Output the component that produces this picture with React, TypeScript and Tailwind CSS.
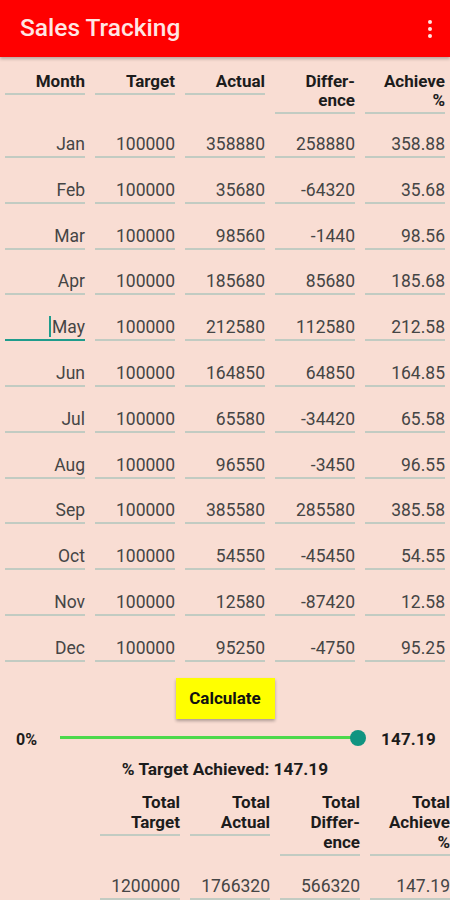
import React from "react";

const rows: [string, string, string, string, string][] = [
  ["Jan", "100000", "358880", "258880", "358.88"],
  ["Feb", "100000", "35680", "-64320", "35.68"],
  ["Mar", "100000", "98560", "-1440", "98.56"],
  ["Apr", "100000", "185680", "85680", "185.68"],
  ["May", "100000", "212580", "112580", "212.58"],
  ["Jun", "100000", "164850", "64850", "164.85"],
  ["Jul", "100000", "65580", "-34420", "65.58"],
  ["Aug", "100000", "96550", "-3450", "96.55"],
  ["Sep", "100000", "385580", "285580", "385.58"],
  ["Oct", "100000", "54550", "-45450", "54.55"],
  ["Nov", "100000", "12580", "-87420", "12.58"],
  ["Dec", "100000", "95250", "-4750", "95.25"],
];

function Cell({ children, bold, focused }: { children: React.ReactNode; bold?: boolean; focused?: boolean }) {
  return (
    <div
      className={
        "w-[80px] shrink-0 text-right leading-[19px] pb-[2px] border-b-2 whitespace-nowrap " +
        (focused ? "border-[#1f9c8c] " : "border-[#c2cbc2] ") +
        (bold ? "font-bold text-[17px] text-[#1c1c1c]" : "text-[17.5px] text-[#454545]")
      }
    >
      {children}
    </div>
  );
}

const totalHead =
  "w-[80px] shrink-0 text-right leading-[20px] pb-[2px] border-b-2 border-[#c2cbc2] font-bold text-[17px] text-[#1c1c1c] whitespace-nowrap";

export default function App() {
  return (
    <div
      className="w-[450px] h-[900px] overflow-hidden bg-[#f9ddd3] relative"
      style={{ fontFamily: "Roboto, 'Liberation Sans', sans-serif" }}
    >
      <div className="h-[57px] bg-[#ff0000] flex items-center justify-between pl-[20px] pr-[18px] shadow-[0_2px_3px_rgba(0,0,0,0.25)] relative z-10">
        <span className="text-[24.5px] font-medium text-[#ffe6e3]">Sales Tracking</span>
        <div className="flex flex-col gap-[3px] items-center">
          <span className="w-[4px] h-[4px] rounded-full bg-[#ffe6e3]" />
          <span className="w-[4px] h-[4px] rounded-full bg-[#ffe6e3]" />
          <span className="w-[4px] h-[4px] rounded-full bg-[#ffe6e3]" />
        </div>
      </div>

      <div className="px-[5px] pt-[15px]">
        <div className="flex gap-[10px] items-start">
          <Cell bold>Month</Cell>
          <Cell bold>Target</Cell>
          <Cell bold>Actual</Cell>
          <Cell bold>
            Differ-
            <br />
            ence
          </Cell>
          <Cell bold>
            Achieve
            <br />%
          </Cell>
        </div>
        {rows.map((r, i) => (
          <div key={r[0]} className={"flex gap-[10px] items-start " + (i === 0 ? "pt-[21px]" : "pt-[22.8px]")}>
            {r.map((v, j) =>
              i === 4 && j === 0 ? (
                <Cell key={j} focused>
                  <span className="relative">
                    <span className="absolute left-[-3px] top-[-1px] w-[2px] h-[21px] bg-[#1f9c8c]" />
                    {v}
                  </span>
                </Cell>
              ) : (
                <Cell key={j}>{v}</Cell>
              )
            )}
          </div>
        ))}
      </div>

      <div className="flex justify-center pt-[16px]">
        <button className="w-[99px] h-[41px] bg-[#ffff00] font-bold text-[17px] text-[#111] shadow-[0_2px_3px_rgba(0,0,0,0.3)]">
          Calculate
        </button>
      </div>

      <div className="flex items-center h-[20px] mt-[9px]">
        <span className="w-[60px] pl-[16px] font-bold text-[16px] text-[#1c1c1c] mt-[4px]">0%</span>
        <div className="relative w-[298px] h-[3px] bg-[#4cd94c]">
          <span className="absolute right-[-8px] top-[-6.5px] w-[16px] h-[16px] rounded-full bg-[#119481]" />
        </div>
        <span className="ml-[23px] font-bold text-[17px] text-[#1c1c1c] mt-[4px] tracking-[0.2px]">147.19</span>
      </div>

      <div className="text-center font-bold text-[17.3px] text-[#1c1c1c] mt-[11px] leading-[20px]">
        % Target Achieved: 147.19
      </div>

      <div className="pl-[100px] pt-[13px]">
        <div className="flex gap-[10px] items-start">
          <div className={totalHead}>
            Total
            <br />
            Target
          </div>
          <div className={totalHead}>
            Total
            <br />
            Actual
          </div>
          <div className={totalHead}>
            Total
            <br />
            Differ-
            <br />
            ence
          </div>
          <div className={totalHead}>
            Total
            <br />
            Achieve
            <br />%
          </div>
        </div>
        <div className="flex gap-[10px] items-start pt-[20px]">
          {["1200000", "1766320", "566320", "147.19"].map((v) => (
            <div
              key={v}
              className="w-[80px] shrink-0 text-right leading-[20px] pb-[2px] border-b-2 border-[#c2cbc2] text-[17.5px] text-[#454545] whitespace-nowrap"
            >
              {v}
            </div>
          ))}
        </div>
      </div>
    </div>
  );
}
